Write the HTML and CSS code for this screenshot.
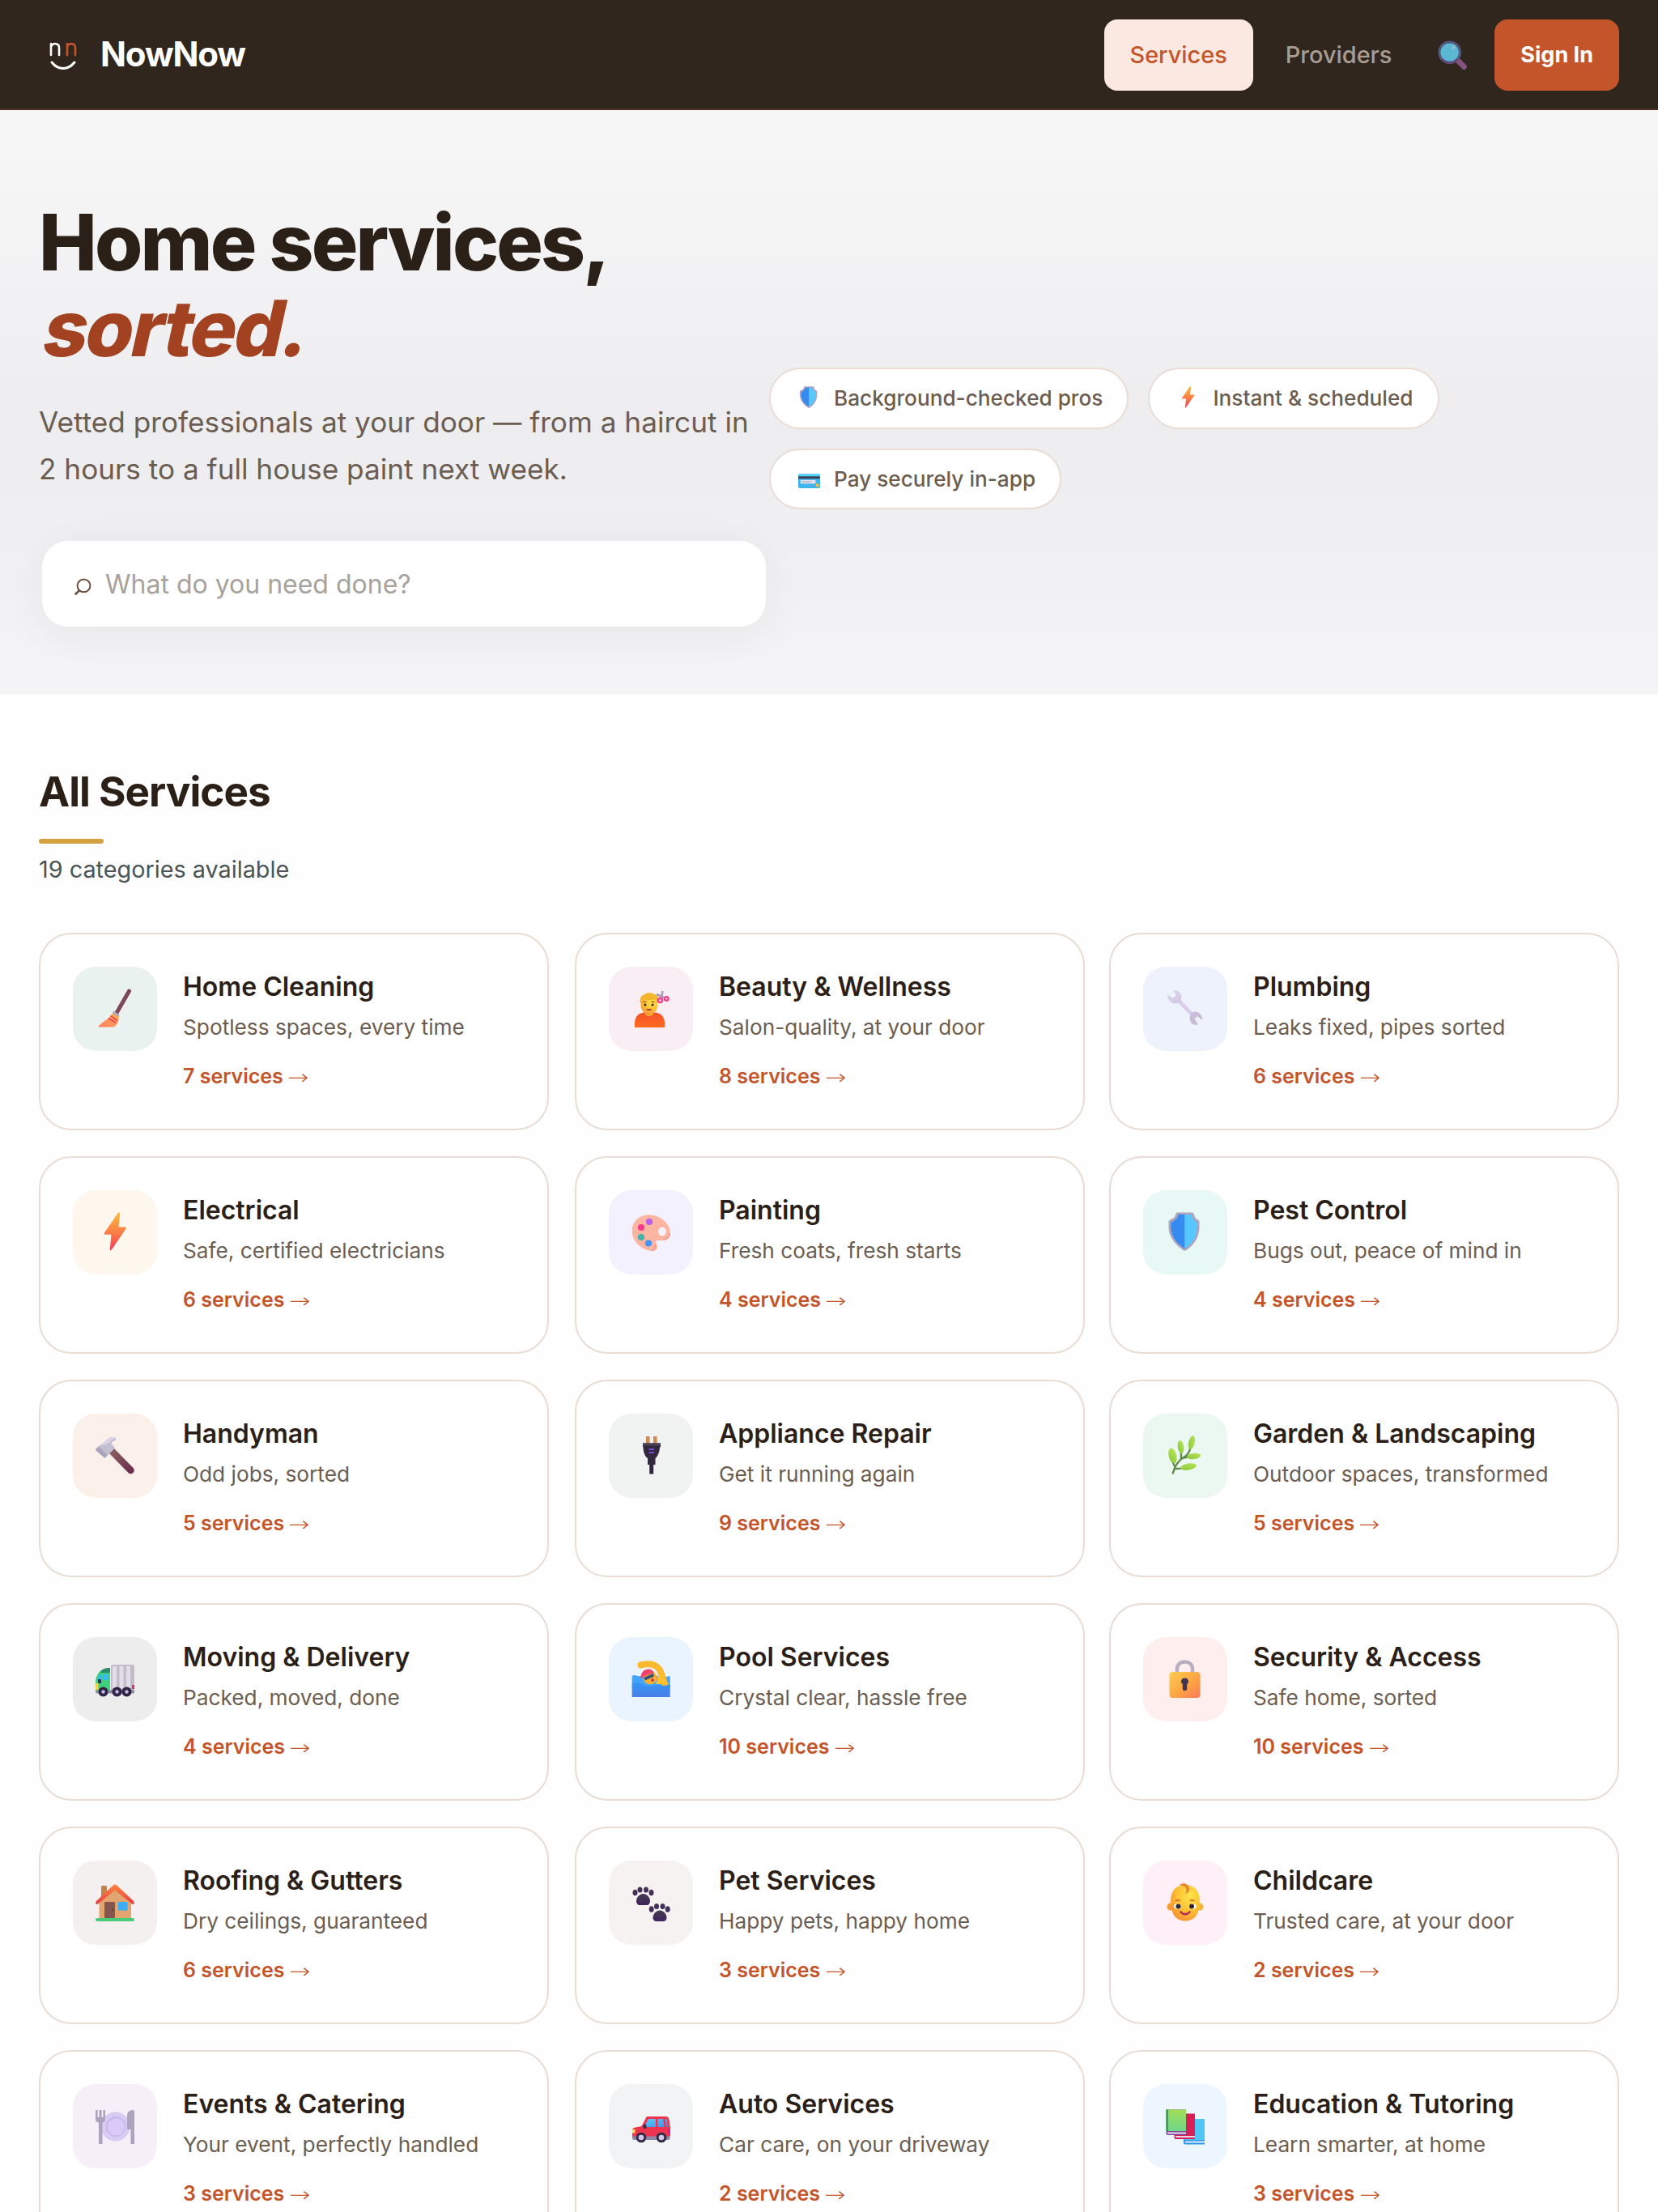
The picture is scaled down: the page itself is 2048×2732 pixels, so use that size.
FILE: index.html
```html
<!DOCTYPE html>
<html lang="en">
<head>
<meta charset="UTF-8" />
<meta name="viewport" content="width=device-width, initial-scale=1.0" />
<title>NowNow</title>
<link rel="stylesheet" href="styles.css">
</head>
<body>
<!-- shared gradients and symbols -->
<svg class="defs" width="0" height="0">
  <defs>
    <linearGradient id="g-bolt" x1="0" y1="0" x2="0" y2="1"><stop offset="0" stop-color="#ffb83d"/><stop offset=".5" stop-color="#fb8145"/><stop offset="1" stop-color="#f53d5c"/></linearGradient>
    <linearGradient id="g-brush" x1="1" y1="0" x2="0" y2="1"><stop offset="0" stop-color="#fdb73e"/><stop offset="1" stop-color="#ff7a6b"/></linearGradient>
    <linearGradient id="g-metal" x1="0" y1="0" x2="1" y2="1"><stop offset="0" stop-color="#dcd8e6"/><stop offset=".5" stop-color="#cfc0e6"/><stop offset="1" stop-color="#c4b9cc"/></linearGradient>
    <linearGradient id="g-wood" x1="0" y1="0" x2="1" y2="1"><stop offset="0" stop-color="#8d5f60"/><stop offset="1" stop-color="#6d3150"/></linearGradient>
    <linearGradient id="g-shirt" x1="0" y1="0" x2="0" y2="1"><stop offset="0" stop-color="#f4512c"/><stop offset="1" stop-color="#ff6a1f"/></linearGradient>
    <radialGradient id="g-skin" cx=".65" cy=".3" r=".75"><stop offset="0" stop-color="#ffe548"/><stop offset=".6" stop-color="#fdbf32"/><stop offset="1" stop-color="#f59334"/></radialGradient>
    <linearGradient id="g-lock" x1="0" y1="0" x2="1" y2="1"><stop offset="0" stop-color="#ffcc4d"/><stop offset=".6" stop-color="#fca144"/><stop offset="1" stop-color="#f87757"/></linearGradient>
    <linearGradient id="g-roof" x1="0" y1="0" x2="0" y2="1"><stop offset="0" stop-color="#ff8540"/><stop offset="1" stop-color="#e63d43"/></linearGradient>
    <linearGradient id="g-water" x1="0" y1="0" x2="0" y2="1"><stop offset="0" stop-color="#3695f6"/><stop offset="1" stop-color="#477fe6"/></linearGradient>
    <linearGradient id="g-leaf" x1="1" y1="0" x2="0" y2="1"><stop offset="0" stop-color="#bde85a"/><stop offset="1" stop-color="#86c43c"/></linearGradient>
    <linearGradient id="g-glass" x1="0" y1="0" x2="1" y2="1"><stop offset="0" stop-color="#5fd0ff"/><stop offset="1" stop-color="#3a8ee8"/></linearGradient>
    <linearGradient id="g-green" x1="0" y1="0" x2="0" y2="1"><stop offset="0" stop-color="#a2de57"/><stop offset="1" stop-color="#6fd68a"/></linearGradient>
    <linearGradient id="g-paw" x1="0" y1="0" x2="0" y2="1"><stop offset="0" stop-color="#433b4d"/><stop offset="1" stop-color="#40245f"/></linearGradient>
  </defs>
  <symbol id="shield" viewBox="0 0 48 48">
    <path d="M15 .5h17c2 0 2.600 1 3 3 .6 3 2 5 4.500 6 1.500.6 2 1.500 2 3.500V18c0 13-6.500 22.500-16 29-1.600 1-2.400 1-4 0C12 40.500 3.500 31 3.500 18v-5c0-2 .5-2.900 2-3.500 2.500-1 5.900-3 6.500-6 .4-2 1-3 3-3z" fill="#afa4bd"/>
    <path d="M23.500 3h-8c-.8 4.500-4 7.600-8.500 9.300-.5.200-.6.700-.6 1.500v4.500C6.400 30 13.500 39.500 23.500 45z" fill="#368bf0"/>
    <path d="M23.500 3h8c.8 4.500 2.500 7.600 6.500 9.300.5.200.6.700.6 1.500v4.500C38.600 30 33 39.500 23.500 45z" fill="#56c8ff"/>
  </symbol>
  <symbol id="bolt" viewBox="0 0 48 48">
    <path d="M27.500 1.500 11 25.500c-.8 1.200-.3 2.200 1 2.200h7.500l-1.700 18c-.2 1.800 1 2.200 2 .7L37.500 20.800c.8-1.300.4-2.300-1-2.300h-8l1.700-16c.1-2-1.500-2.600-2.700-1z" fill="url(#g-bolt)"/>
  </symbol>
</svg>

<header class="navbar">
  <a class="brand">
    <svg class="brand-mark" viewBox="0 0 64 64" fill="none" stroke-linecap="round" stroke-linejoin="round">
      <path d="M15 19v14M15 23c1-3.300 2.800-4 5-4 3 0 5 1.600 5 5v9" stroke="#fff" stroke-width="2.600"/>
      <path d="M35 19v14M35 23c1-3.300 2.800-4 5-4 3 0 5 1.600 5 5v9" stroke="#c4552a" stroke-width="2.600"/>
      <path d="M16 42c8 10 20 10 28 0" stroke="#fff" stroke-width="3"/>
    </svg>
    <span class="brand-name">NowNow</span>
  </a>
  <nav class="nav-links">
    <a class="nav-link active">Services</a>
    <a class="nav-link">Providers</a>
    <a class="nav-search">
      <svg viewBox="0 0 48 48"><path d="m31 31 11 11" stroke="#9a5f9c" stroke-width="9" stroke-linecap="round"/><circle cx="19" cy="19" r="16.500" fill="#68dcff" stroke="#5c6799" stroke-width="4"/><path d="M7 30a16.500 16.500 0 0 0 25 0" fill="none" stroke="#705090" stroke-width="3"/><ellipse cx="25" cy="11" rx="3" ry="3.800" fill="#9ddff5"/></svg>
    </a>
    <a class="btn-signin">Sign In</a>
  </nav>
</header>

<section class="hero">
  <div class="hero-left">
    <h1>Home services,<br><em>sorted.</em></h1>
    <p class="hero-sub">Vetted professionals at your door — from a haircut in 2 hours to a full house paint next week.</p>
    <div class="search-box">
      <svg class="search-glyph" viewBox="0 0 22 22" fill="none" stroke="#6b5040" stroke-width="2"><circle cx="11.500" cy="9.400" r="7.900"/><path d="M6.200 15 .8 20.300" stroke-width="2.600"/></svg>
      <span class="placeholder">What do you need done?</span>
    </div>
  </div>
  <div class="hero-pills">
    <div class="pill"><svg class="emoji"><use href="#shield"/></svg>Background-checked pros</div>
    <div class="pill"><svg class="emoji"><use href="#bolt"/></svg>Instant &amp; scheduled</div>
    <div class="pill">
      <svg class="emoji" viewBox="0 0 48 48"><rect y="17" width="48" height="31" rx="3" fill="#3fb4ec"/><path d="M0 22v-2c0-2 1-3 3-3h42c2 0 3 1 3 3v2z" fill="#4fd2f7"/><path d="M0 22h48v5H0z" fill="#3c3b50"/><rect x="5" y="30" width="33" height="8" fill="#dfe3ec"/><path d="M8 34h20" stroke="#a3a0b5" stroke-width="2"/><rect x="39" y="38" width="6" height="7" rx="1" fill="#f3c53c"/></svg>Pay securely in-app
    </div>
  </div>
</section>

<main class="services">
  <h2>All Services</h2>
  <div class="rule"></div>
  <p class="count">19 categories available</p>

  <div class="grid">
    <div class="card">
      <div class="icon cleaning">
        <svg viewBox="0 0 48 48"><path d="M41.500 3 26 30" stroke="url(#g-wood)" stroke-width="5" stroke-linecap="round"/><path d="m21.500 30 7.500 4c-.3 6-2 10-5 12.500-1 .9-2 1-3 1H5c-1.500 0-1.600-.8-.6-1.800C10 40 16 38 21.500 30z" fill="url(#g-brush)"/><path d="m18.500 33.500 8.500 6M16 36.500l9.500 6" stroke="#f0415d" stroke-width="1.600"/><path d="m22 27.500 7.500 4.500-1.200 3-7.500-4.500z" fill="#b3a5c4"/></svg>
      </div>
      <div class="info">
        <h3>Home Cleaning</h3>
        <p>Spotless spaces, every time</p>
        <span class="link">7 services <i>→</i></span>
      </div>
    </div>
    <div class="card">
      <div class="icon beauty">
        <svg viewBox="0 0 48 48"><path d="M4 48V42c0-8 6-12.500 13-12.500h11C35 29.500 41 34 41 42v6z" fill="url(#g-shirt)"/><path d="M17 27h10v4.500c-2 3.500-8 3.500-10 0z" fill="#f3a52f"/><path d="M11.500 12h21v8c0 6.500-4.500 11.500-10.500 11.500S11.500 26.500 11.500 20z" fill="url(#g-skin)"/><path d="M11 18c-1.500-6 1-10 5-10.500C18 4.500 25 4.500 28 7c4 .5 6.500 4 5 11-2-1-2.500-4-4-5-5 1.500-11 1.500-14 0-2 1-2.500 3-4 5z" fill="#f4b52e"/><path d="M14.500 16.500h4M24.500 16.500h4" stroke="#a9651f" stroke-width="1.300"/><circle cx="17" cy="20" r="1.500" fill="#34262c"/><circle cx="26" cy="20" r="1.500" fill="#34262c"/><path d="M19.500 26h4.500" stroke="#b9384c" stroke-width="1.800" stroke-linecap="round"/><path d="m38.500 3-1.500 9M31 7l9 4" stroke="#a99cb8" stroke-width="2.500"/><circle cx="35.500" cy="14.500" r="2.500" fill="none" stroke="#f0418a" stroke-width="2.300"/><circle cx="43.300" cy="12.500" r="2.300" fill="none" stroke="#f0418a" stroke-width="2.300"/></svg>
      </div>
      <div class="info">
        <h3>Beauty &amp; Wellness</h3>
        <p>Salon-quality, at your door</p>
        <span class="link">8 services <i>→</i></span>
      </div>
    </div>
    <div class="card">
      <div class="icon plumbing">
        <svg viewBox="0 0 48 48"><path d="M9 2.200c8-1.500 12 6 9.500 12L33 29.500c5.500-3.500 12.500 2 12.200 9.500L39 34l-3.500 3.500 4.500 7c-8 2-12.500-5.500-9.700-12L15.500 17.500C9 21 1.500 15 2.500 7.500l6 4.500 4.200-3.500z" fill="url(#g-metal)"/><path d="m18.500 17 12.500 13" stroke="#e0d3f0" stroke-width="2.500"/></svg>
      </div>
      <div class="info">
        <h3>Plumbing</h3>
        <p>Leaks fixed, pipes sorted</p>
        <span class="link">6 services <i>→</i></span>
      </div>
    </div>

    <div class="card">
      <div class="icon electrical"><svg><use href="#bolt"/></svg></div>
      <div class="info">
        <h3>Electrical</h3>
        <p>Safe, certified electricians</p>
        <span class="link">6 services <i>→</i></span>
      </div>
    </div>
    <div class="card">
      <div class="icon painting">
        <svg viewBox="0 0 48 48"><path fill-rule="evenodd" d="M22 3.500C35 3.500 48 14 48 26c0 6-4 9-9.500 9H33c-3 0-3.500 2-2 4.500 2.500 4.500 0 9-5.500 8.500C11 46.500.7 35.500.7 23.500.7 11.500 9 3.500 22 3.500zM38 18.500a4.800 5.500 0 1 0 0 11 4.800 5.500 0 1 0 0-11z" fill="#fcb5a0"/><path d="M24 47c5 0 6-4 5-7M40 34c4-.5 7-3 7-8" stroke="#f59b96" stroke-width="1.600" fill="none"/><circle cx="22" cy="12" r="4.100" fill="#bd5cf0"/><circle cx="12" cy="19" r="4.100" fill="#f53a8c"/><circle cx="12" cy="31" r="4.100" fill="#42b0ad"/><circle cx="21" cy="38.500" r="4.100" fill="#4096f5"/></svg>
      </div>
      <div class="info">
        <h3>Painting</h3>
        <p>Fresh coats, fresh starts</p>
        <span class="link">4 services <i>→</i></span>
      </div>
    </div>
    <div class="card">
      <div class="icon pest"><svg><use href="#shield"/></svg></div>
      <div class="info">
        <h3>Pest Control</h3>
        <p>Bugs out, peace of mind in</p>
        <span class="link">4 services <i>→</i></span>
      </div>
    </div>

    <div class="card">
      <div class="icon handyman">
        <svg viewBox="0 0 48 48"><path d="m19 18 24.500 25" stroke="url(#g-wood)" stroke-width="8.500" stroke-linecap="round"/><path d="m1 16 4-3.500L17 3c2-1.500 5-1.500 8 0v3c-3 .5-5 2-5.500 4l4.500 5.500-9 9-3 3.500L0 18z" fill="#c3bfd0"/><path d="M5 13 17 3c2-1.500 5-1.500 8 0-4 1-7 4-8.500 6.500z" fill="#d9d6e6"/><path d="m1 16 3-2.500 10.500 10.500-3.500 3.500L0 18z" fill="#aaa5bf"/></svg>
      </div>
      <div class="info">
        <h3>Handyman</h3>
        <p>Odd jobs, sorted</p>
        <span class="link">5 services <i>→</i></span>
      </div>
    </div>
    <div class="card">
      <div class="icon appliance">
        <svg viewBox="0 0 48 48"><path d="M18 1h4.500v9H18zM27 1h4.500v9H27z" fill="#d28a55"/><path d="M14 9.500h22V14l-1 .5C34.500 23 31 27 29.500 28v8h-2.300v11.500h-5V36H20v-8c-2-1-5.200-5-5.500-13.500L14 14z" fill="#33293f"/><path d="M14 9.500h22v3H14z" fill="#4a4057"/><path d="M21.500 17h6.500M21.500 21h6.500" stroke="#7a4ae0" stroke-width="1.800"/></svg>
      </div>
      <div class="info">
        <h3>Appliance Repair</h3>
        <p>Get it running again</p>
        <span class="link">9 services <i>→</i></span>
      </div>
    </div>
    <div class="card">
      <div class="icon garden">
        <svg viewBox="0 0 48 48"><path d="M8.500 47.500C11 38 15 31 22 27c5-2.500 7-6 8.500-12M11 38c-2-3-2.500-6-2.500-9M19 29v-9M21 28c4-1.500 8-2 12-2M11 41c6 0 10 0 15-2" fill="none" stroke="#5f8a4c" stroke-width="2.400"/><ellipse cx="8.500" cy="25" rx="4.800" ry="9.500" transform="rotate(-14 8.500 25)" fill="url(#g-leaf)"/><ellipse cx="18.500" cy="14" rx="3.800" ry="8" transform="rotate(-8 18.500 14)" fill="url(#g-leaf)"/><ellipse cx="32" cy="8.500" rx="3.700" ry="8.500" transform="rotate(14 32 8.500)" fill="url(#g-leaf)"/><ellipse cx="34.500" cy="25.500" rx="8.500" ry="3.600" transform="rotate(-6 34.500 25.500)" fill="url(#g-leaf)"/><ellipse cx="28" cy="38.500" rx="10" ry="4" transform="rotate(-10 28 38.500)" fill="url(#g-leaf)"/></svg>
      </div>
      <div class="info">
        <h3>Garden &amp; Landscaping</h3>
        <p>Outdoor spaces, transformed</p>
        <span class="link">5 services <i>→</i></span>
      </div>
    </div>

    <div class="card">
      <div class="icon moving">
        <svg viewBox="0 0 48 48"><path d="M0 38h48v3c0 1-1 1.500-2 1.500H2c-1.500 0-2-1-2-2z" fill="#938aa3"/><rect x="19" y="7" width="29" height="31" rx="1.500" fill="#c2bbca"/><path d="M23.500 9v28M32 9v28M40.500 9v28" stroke="#e2dee7" stroke-width="5"/><path d="M18 13v26H0V27c1-7 4-11 8-14z" fill="#3ed07c"/><path d="M7 15c2-3 5-4 11-4v6H6z" fill="#2b8a67"/><path d="M10 19h6v7h-7zM3 24l2-5h3l-1 8H2z" fill="#37b9f5"/><rect x="3" y="25" width="4" height="5" fill="#273557"/><path d="M0 30h3.500v8H0z" fill="#f2d04a"/><rect x="45" y="32" width="3" height="5" fill="#e02b70"/><g fill="#2f2346"><circle cx="9.500" cy="40.500" r="6"/><circle cx="26.500" cy="40.500" r="6"/><circle cx="38.500" cy="40.500" r="6"/></g><g fill="#c6bbdc"><circle cx="9.500" cy="40.500" r="2.200"/><circle cx="26.500" cy="40.500" r="2.200"/><circle cx="38.500" cy="40.500" r="2.200"/></g></svg>
      </div>
      <div class="info">
        <h3>Moving &amp; Delivery</h3>
        <p>Packed, moved, done</p>
        <span class="link">4 services <i>→</i></span>
      </div>
    </div>
    <div class="card">
      <div class="icon pool">
        <svg viewBox="0 0 48 48"><path d="M.7 21c4-2.500 6 1 10 0s6-2 10 0 7-1 11 0 6-2 9 0 4 0 7 0v17H.7z" fill="#42a5fb"/><path d="M11.500 7.500C22 5 30 6 34.500 13c3 5 4 10 6.500 17" fill="none" stroke="#fdb92e" stroke-width="8" stroke-linecap="round"/><path d="M34 18c4 2 8 7 12 13H30z" fill="#fdc02e"/><circle cx="23" cy="23" r="8.500" fill="#ffb02f"/><path d="M11.500 24c0-8 4.500-11.500 9.500-11.500 4 0 6 2.500 6.500 4.500-5 1-11 4-16 7z" fill="#f0426d"/><path d="m15 23 12-5.500 1 4-11 5z" fill="#3c5273"/><circle cx="26" cy="26" r="1.700" fill="#a62055"/><path d="M.7 31c5-3 8-2 12 0s8 2.500 13 2c5-.5 7-2 11-.5s7-1 11-.5V47H.7z" fill="url(#g-water)"/></svg>
      </div>
      <div class="info">
        <h3>Pool Services</h3>
        <p>Crystal clear, hassle free</p>
        <span class="link">10 services <i>→</i></span>
      </div>
    </div>
    <div class="card">
      <div class="icon security">
        <svg viewBox="0 0 48 48"><path d="M14 18v-5.500C14 7 18 3.500 23.500 3.500S33 7 33 12.500V18" fill="none" stroke="#b7afc0" stroke-width="4.500"/><rect x="4.500" y="16" width="38" height="32" rx="4" fill="url(#g-lock)"/><path d="M23.500 23.500c3 0 4.500 2 4.500 4 0 1.800-.8 2.800-1.800 3.500v6c0 3-5.400 3-5.400 0v-6c-1-.7-1.800-1.700-1.800-3.500 0-2 1.500-4 4.500-4z" fill="#403452"/></svg>
      </div>
      <div class="info">
        <h3>Security &amp; Access</h3>
        <p>Safe home, sorted</p>
        <span class="link">10 services <i>→</i></span>
      </div>
    </div>

    <div class="card">
      <div class="icon roofing">
        <svg viewBox="0 0 48 48"><rect x="7" y="4" width="7" height="15" rx="1" fill="#c68446"/><path d="M4.500 25 24 9l20 16v20h-39.500z" fill="#e3a56f"/><path d="M24 2.500c1 0 1.500.3 2.300 1L47 23c1.800 1.700 0 5-2 3.500L24 9.500 3 26.500c-2 1.500-4-1.500-2-3.500L21.700 3.500c.8-.7 1.300-1 2.300-1z" fill="url(#g-roof)"/><rect x="11" y="24" width="13" height="20" rx="1" fill="#855550"/><circle cx="21" cy="34" r="1.100" fill="#513136"/><rect x="28" y="24" width="11.500" height="10.500" rx="1" fill="#39aef5"/><rect y="44" width="48" height="4" rx="2" fill="#48cc79"/></svg>
      </div>
      <div class="info">
        <h3>Roofing &amp; Gutters</h3>
        <p>Dry ceilings, guaranteed</p>
        <span class="link">6 services <i>→</i></span>
      </div>
    </div>
    <div class="card">
      <div class="icon pet">
        <svg viewBox="0 0 48 48" fill="url(#g-paw)"><ellipse cx="4.500" cy="12.500" rx="3" ry="3.800"/><ellipse cx="10.500" cy="9" rx="3" ry="3.600"/><ellipse cx="18" cy="9" rx="3" ry="3.600"/><ellipse cx="24.500" cy="12.500" rx="3" ry="3.800"/><path d="M14.500 14c4.500 0 8.500 4.500 8.500 9 0 3-2 5-4.500 5h-8C8 28 6 26 6 23c0-4.500 4-9 8.500-9z"/><ellipse cx="24.700" cy="33" rx="3" ry="3.800"/><ellipse cx="31" cy="29.500" rx="3" ry="3.600"/><ellipse cx="38.500" cy="29.500" rx="3" ry="3.600"/><ellipse cx="44.700" cy="33" rx="3" ry="3.800"/><path d="M35 34.500c4.500 0 8.500 4.500 8.500 9 0 3-2 4.500-4.500 4.500h-8c-2.500 0-4.500-1.500-4.500-4.500 0-4.500 4-9 8.500-9z"/></svg>
      </div>
      <div class="info">
        <h3>Pet Services</h3>
        <p>Happy pets, happy home</p>
        <span class="link">3 services <i>→</i></span>
      </div>
    </div>
    <div class="card">
      <div class="icon childcare">
        <svg viewBox="0 0 48 48"><circle cx="6" cy="30" r="4.500" fill="#f79a37"/><circle cx="42" cy="30" r="4.500" fill="#f7b337"/><path d="M24 3c12 0 18 8 18 20 0 15-6 24.500-18 24.500S6 38 6 23C6 11 12 3 24 3z" fill="url(#g-skin)"/><path d="M17 3c4-3.500 11-2 12 4 .5 4-2 7-5 7 2-3 2-7-1-9z" fill="#e88a30"/><path d="M12 23c1-1.500 4-1.500 5.500-.7M30 22.300c1.500-.8 4.500-.8 5.500.7" stroke="#c4611f" stroke-width="1.500" fill="none"/><ellipse cx="14.500" cy="29.500" rx="4.500" ry="3.300" fill="#fff"/><ellipse cx="33" cy="29.500" rx="4.500" ry="3.300" fill="#fff"/><circle cx="15.500" cy="29.500" r="3" fill="#35252b"/><circle cx="32" cy="29.500" r="3" fill="#35252b"/><path d="M18.500 36.500c3 3.500 8 3.500 11 0" fill="none" stroke="#b52757" stroke-width="2.600" stroke-linecap="round"/></svg>
      </div>
      <div class="info">
        <h3>Childcare</h3>
        <p>Trusted care, at your door</p>
        <span class="link">2 services <i>→</i></span>
      </div>
    </div>

    <div class="card">
      <div class="icon events">
        <svg viewBox="0 0 48 48"><circle cx="24.500" cy="25.500" r="18" fill="#d8ccf2"/><circle cx="25" cy="25.500" r="12.500" fill="#c9b8ec"/><circle cx="25.500" cy="26" r="10.500" fill="#d9cbf7"/><path d="M0 5h2.500v9h2V5h3v9h2V5H12v12c0 2-1.500 3-3.500 3.500V47H4V20.500C1.500 20 0 19 0 17z" fill="#aca3bd"/><path d="M48 7v40h-4.500V29H39V12c0-4 3-7 7-7 1.500 0 2 .7 2 2z" fill="#aca3bd"/></svg>
      </div>
      <div class="info">
        <h3>Events &amp; Catering</h3>
        <p>Your event, perfectly handled</p>
        <span class="link">3 services <i>→</i></span>
      </div>
    </div>
    <div class="card">
      <div class="icon auto">
        <svg viewBox="0 0 48 48"><path d="M1 36h46.500v4c0 1-1 2-2 2h-42c-1.500 0-2.500-1-2.500-2z" fill="#8f87ab"/><path d="M20 13h22c3 0 4 1.500 4.500 4l1.500 10v10.500H1V31c0-3 1-4 4-4.500l7.500-1.500L18 14.500c.5-1 1-1.500 2-1.500z" fill="#ee3350"/><path d="M21 16h9v10H15.500zM32.500 16h6.500l1.500 10h-8zM41.500 16h2l1.500 10h-2z" fill="url(#g-glass)"/><rect x="14.500" y="23" width="4" height="5" rx="1" fill="#3b3048"/><rect x="1" y="29" width="3.500" height="4.500" fill="#f8df4b"/><rect x="45" y="29" width="3" height="5" fill="#d418a0"/><circle cx="12" cy="39" r="6.300" fill="#342a45"/><circle cx="37" cy="39" r="6.300" fill="#342a45"/><circle cx="12" cy="39" r="3.300" fill="#d3c8e8"/><circle cx="37" cy="39" r="3.300" fill="#d3c8e8"/></svg>
      </div>
      <div class="info">
        <h3>Auto Services</h3>
        <p>Car care, on your driveway</p>
        <span class="link">2 services <i>→</i></span>
      </div>
    </div>
    <div class="card">
      <div class="icon education">
        <svg viewBox="0 0 48 48"><path d="M22 16h26v31.500H24c-1.500 0-2-1-2-2z" fill="#2f9be8"/><path d="M24 16h24v26H24z" fill="#50c6f5"/><path d="M24 43.500h24v2H24z" fill="#dfe8f8"/><path d="M10.500 9.500H36V41H12c-1 0-1.500-1-1.500-2z" fill="#d91f58"/><path d="M12 37h24v2H12z" fill="#ecd5e4"/><path d="M.5 4.500H25V36H2c-1 0-1.500-1-1.500-2z" fill="#7c4793"/><path d="M.5 4.500H25V31H.5z" fill="url(#g-green)"/><path d="M.5 4.500H3V31H.5z" fill="#3c9b55"/><path d="M2 32.500h23v2H2z" fill="#e8deef"/></svg>
      </div>
      <div class="info">
        <h3>Education &amp; Tutoring</h3>
        <p>Learn smarter, at home</p>
        <span class="link">3 services <i>→</i></span>
      </div>
    </div>
  </div>
</main>
</body>
</html>
```
FILE: styles.css
```css
* {
  box-sizing: border-box;
}
body {
  margin: 0;
  height: 100vh;
  overflow: hidden;
  font-family: Inter, "Liberation Sans", sans-serif;
  color: #2b2018;
  background: #fefefe;
}
h1, h2, h3, p {
  margin: 0;
}
.defs {
  position: absolute;
}

/* Navbar */
.navbar {
  display: flex;
  align-items: center;
  justify-content: space-between;
  height: 136px;
  padding: 2px 48px 0;
  background: #30261e;
  border-bottom: 2px solid #4b2f22;
}
.brand {
  display: flex;
  align-items: center;
  gap: 12px;
  margin-bottom: 3px;
}
.brand-mark {
  width: 64px;
  height: 64px;
}
.brand-name {
  font-size: 42px;
  font-weight: 700;
  letter-spacing: -1.15px;
  color: #fff;
}
.nav-links {
  display: flex;
  align-items: center;
  gap: 8px;
}
.nav-link {
  display: flex;
  align-items: center;
  height: 88px;
  padding: 0 32px 2px;
  border-radius: 16px;
  font-size: 28.9px;
  font-weight: 500;
  color: #a99c92;
}
.nav-link.active {
  padding-left: 31px;
  color: #c4552a;
  background: #fae8e1;
}
.nav-search {
  display: flex;
  padding: 0 17px;
}
.nav-search svg {
  width: 37px;
  height: 37px;
  opacity: 0.8;
}
.btn-signin {
  display: flex;
  align-items: center;
  height: 88px;
  margin-left: 8px;
  padding: 0 32px 1px;
  border-radius: 16px;
  font-size: 27px;
  font-weight: 700;
  color: #fff;
  background: #c4552a;
}

/* Hero */
.hero {
  display: grid;
  grid-template-columns: 902px 902px;
  align-items: start;
  height: 722px;
  padding: 111px 48px 0;
  background: linear-gradient(180deg, #f7f7f7 0%, #ededf0 55%, #f4f4f6 100%);
}
h1 {
  font-size: 96px;
  font-weight: 800;
  line-height: 105.6px;
  letter-spacing: -2.88px;
}
h1 em {
  display: inline-block;
  font-style: normal;
  color: #a34220;
  transform: skewX(-12.5deg);
  transform-origin: 0 88px;
}
.hero-sub {
  margin-top: 34px;
  font-size: 35.2px;
  line-height: 58px;
  color: #6b5d51;
}
.search-box {
  display: flex;
  align-items: center;
  gap: 16px;
  height: 106px;
  margin: 60px 4px 0;
  padding: 0 40px;
  border-radius: 32px;
  background: #fff;
  box-shadow: 0 8px 48px rgba(43, 32, 24, 0.06);
}
.search-glyph {
  width: 22px;
  height: 22px;
  margin-top: 8px;
}
.placeholder {
  font-size: 32px;
  color: #a8a29d;
}
.hero-pills {
  display: flex;
  flex-wrap: wrap;
  gap: 24px;
  padding-top: 207px;
}
.pill {
  display: flex;
  align-items: center;
  gap: 17px;
  height: 75.5px;
  padding: 0 30px 0 34px;
  border: 2px solid #e8dcd4;
  border-radius: 40px;
  font-size: 26.2px;
  font-weight: 500;
  color: #6b5d51;
  background: #fff;
}
.emoji {
  width: 27px;
  height: 27px;
  margin-bottom: 3px;
}

/* Services */
.services {
  padding: 87px 48px 0;
}
h2 {
  font-size: 51.2px;
  font-weight: 700;
  line-height: 64px;
  letter-spacing: -1px;
}
.rule {
  width: 80px;
  height: 6px;
  margin-top: 27px;
  border-radius: 3px;
  background: #d4a040;
}
.count {
  margin-top: 9px;
  font-size: 28.8px;
  line-height: 46px;
  color: #4a5556;
}
.grid {
  display: grid;
  grid-template-columns: 662px 660px 630px;
  row-gap: 32px;
  margin-top: 55px;
}
.card {
  display: flex;
  gap: 32px;
  width: 630px;
  height: 244px;
  padding: 40px;
  border: 2px solid #e8dcd4;
  border-radius: 40px;
  background: #fff;
}
.icon {
  display: flex;
  align-items: center;
  justify-content: center;
  flex: none;
  width: 104px;
  height: 104px;
  border-radius: 28px;
}
.icon svg {
  width: 48px;
  height: 48px;
  margin-bottom: 2px;
}
.cleaning { background: #eaf2ef; }
.beauty { background: #f9eef3; }
.plumbing { background: #edf2fc; }
.electrical { background: #fdf7ed; }
.painting { background: #f3f1fe; }
.pest { background: #e8f8f4; }
.handyman { background: #fcf0ea; }
.appliance { background: #f1f3f3; }
.garden { background: #ebf7f1; }
.moving { background: #ededee; }
.pool { background: #e9f4fe; }
.security { background: #feefee; }
.roofing { background: #f4f0f0; }
.pet { background: #f6f2f2; }
.childcare { background: #fef0f6; }
.events { background: #f6eff8; }
.auto { background: #f1f3f5; }
.education { background: #edf6fe; }

.info {
  display: flex;
  flex-direction: column;
  white-space: nowrap;
}
.info h3 {
  margin-top: 1px;
  font-size: 32px;
  font-weight: 600;
  line-height: 48px;
}
.info p {
  margin-top: 6px;
  font-size: 26.24px;
  line-height: 40px;
  color: #6b5d51;
}
.link {
  margin-top: 21px;
  font-size: 25px;
  font-weight: 600;
  line-height: 38px;
  color: #c4552a;
}
.link i {
  display: inline-block;
  font-family: "DejaVu Sans", sans-serif;
  font-style: normal;
  font-weight: 200;
  line-height: 1;
  transform: translate(-1px, 1px) scaleX(1.25);
  transform-origin: 0 50%;
}
```
